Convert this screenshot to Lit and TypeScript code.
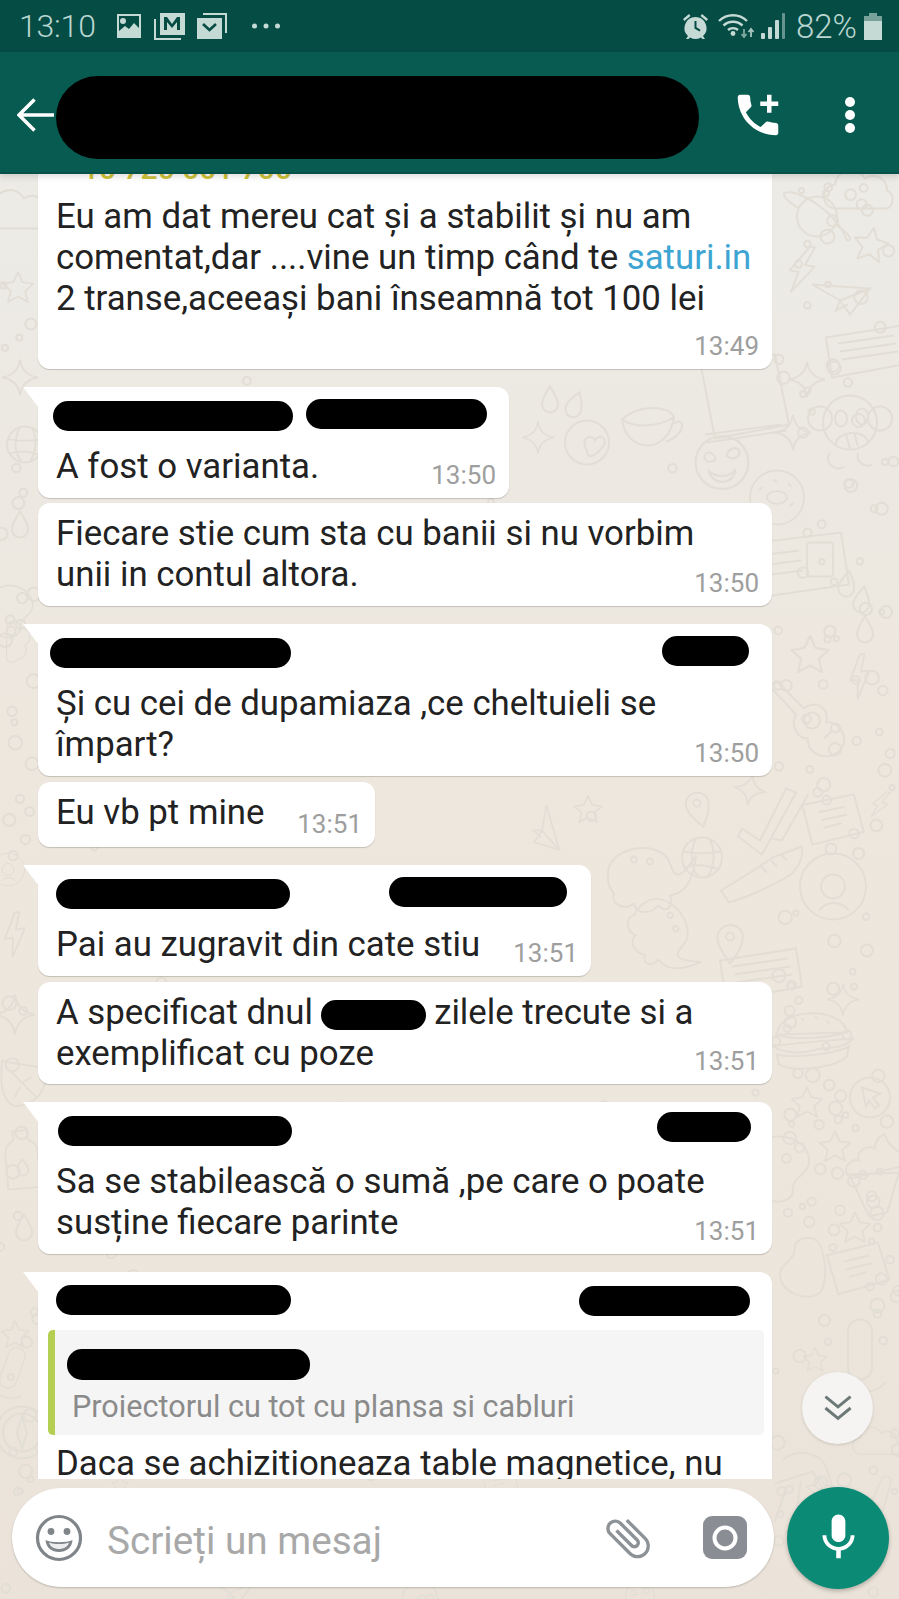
import { LitElement, html, css, svg } from "lit";
import { customElement } from "lit/decorators.js";

type Blob = { ml: number; w: number; mt: number };
type Msg = {
  cls: string;
  width: number;
  time: string;
  blobs?: Blob[];
  lines: unknown[];
};

const LINK = html`<span class="link">saturi.in</span>`;
const MESSAGES: Msg[] = [
  { cls: "top", width: 734, time: "13:49", lines: ["Eu am dat mereu cat și a stabilit și nu am", html`comentat,dar ....vine un timp când te ${LINK}`, "2 transe,aceeași bani înseamnă tot 100 lei"] },
  { cls: "group tail", width: 471, time: "13:50", blobs: [{ ml: -3, w: 240, mt: 14 }, { ml: 13, w: 181, mt: 12 }], lines: ["A fost o varianta."] },
  { cls: "cont", width: 734, time: "13:50", lines: ["Fiecare stie cum sta cu banii si nu vorbim", "unii in contul altora."] },
  { cls: "group tail", width: 734, time: "13:50", blobs: [{ ml: -6, w: 241, mt: 14 }, { ml: 371, w: 87, mt: 12 }], lines: ["Și cu cei de dupamiaza ,ce cheltuieli se", "împart?"] },
  { cls: "cont pb15", width: 337, time: "13:51", lines: ["Eu vb pt mine"] },
  { cls: "group tail", width: 553, time: "13:51", blobs: [{ ml: 0, w: 234, mt: 14 }, { ml: 99, w: 178, mt: 12 }], lines: ["Pai au zugravit din cate stiu"] },
  { cls: "cont pb11", width: 734, time: "13:51", lines: [html`A specificat dnul <span class="blob inline"></span> zilele trecute si a`, "exemplificat cu poze"] },
  { cls: "group tail", width: 734, time: "13:51", blobs: [{ ml: 2, w: 234, mt: 14 }, { ml: 365, w: 94, mt: 10 }], lines: ["Sa se stabilească o sumă ,pe care o poate", "susține fiecare parinte"] },
];

/* ---------- wallpaper doodles: a free canvas, coordinates are the content ---------- */
const D: Record<string, unknown> = {
  planet: svg`<circle r="20"/><path d="M-18-8C-34-18-36-24-30-24M18 8C34 18 36 24 30 24M-30-24C-16-26 20-4 30 24"/>`,
  cloud: svg`<path d="M-26 14a12 12 0 0 1-2-24a16 16 0 0 1 30-6a14 14 0 0 1 22 12a10 10 0 0 1 0 18z"/>`,
  star: svg`<path d="M0-17L5-6L17-4L8 4L11 16L0 10L-11 16L-8 4L-17-4L-5-6z" stroke-linejoin="round"/>`,
  sparkle: svg`<path d="M0-20Q2-3 20 0Q2 3 0 20Q-2 3-20 0Q-2-3 0-20z"/>`,
  bolt: svg`<path d="M4-24L-12 3H-3L-7 24L12-5H2L9-24z" stroke-linejoin="round"/>`,
  plane: svg`<path d="M-28-12L30-8L10 18L0 4zM0 4L30-8M0 4L-4 14L8 8"/>`,
  ticket: svg`<path d="M-40-14L36-26L42 12L-34 26zM-28-8L28-16M-26 0L30-8M-24 8L32 0"/>`,
  news: svg`<path d="M-46-20L38-30L46 22L-38 34zM-36-8L-4-12M-34 2L-2-2M-32 12L0 8"/><rect x="4" y="-20" width="26" height="34" rx="3"/>`,
  monkey: svg`<circle r="27"/><circle cx="-30" cy="-4" r="12"/><circle cx="30" cy="-4" r="12"/><ellipse cx="-9" cy="-4" rx="6" ry="8"/><ellipse cx="12" cy="-6" rx="6" ry="8"/><path d="M-14 22C-14 8 16 6 18 20M-4 12L0 26M4 10L8 24M-20 30a10 10 0 0 0 14 14M8 30a10 10 0 0 0 14 12"/>`,
  cup: svg`<path d="M-28-10C-24 24 18 26 24-12M-28-10C-14-24 18-26 24-12C10-4-14 0-28-10zM24-6C36-14 36 6 16 12"/>`,
  smiley: svg`<circle r="24"/><path d="M-16-4C-16-12-6-10-6-2C-12 0-14 0-16-4zM16-8C16-16 6-14 4-6C10-2 14-4 16-8zM-12 8C-4 14 8 14 12 6C12 20-8 22-12 8z"/>`,
  heart: svg`<circle r="22"/><path d="M-8 2C-12-8 0-10 2-4C6-12 16-6 10 2C6 8 0 12-4 12z" transform="translate(6,2)"/>`,
  drop: svg`<path d="M0-13C6-4 8 0 8 5a8 8 0 0 1-16 0C-8 0-6-4 0-13z"/>`,
  pin: svg`<path d="M0 22C-10 8-14 0-12-8a13 13 0 0 1 25 2C13 4 8 12 0 22z"/><circle cy="-5" r="4"/>`,
  burger: svg`<path d="M-36-8C-34-36 30-36 34-10zM-38-8C-20-2 20-4 38-12M-40 4C-20 0 20-2 40-4C30 8 10 4 0 8C-14 12-30 10-40 4zM-36 12C-20 16 20 12 36 4L34 14C20 26-20 30-34 22z"/><path d="M-12-24l3 2M2-26l3 2M14-22l2 3"/>`,
  ball: svg`<circle r="20"/><path d="M-19-6C-8-4 8-4 19-6M-17 10C-6 6 8 8 16 12M-6-19C-12-6-12 8-4 19M8-18C14-6 12 8 6 19"/>`,
  vinyl: svg`<circle r="33"/><circle r="12"/><path d="M-14 24C-6 14 8 14 16 24"/>`,
  guitar: svg`<path d="M-44-44L-16-16C-2-26 10-14 6-2C20-4 30 14 20 26C8 38-14 30-12 14C-22 14-30 2-24-10L-50-38z"/><circle cx="-8" cy="-4" r="8"/><path d="M4 14L12 6"/>`,
  sneaker: svg`<path d="M-46 18C-30 8-12-2 4-14C12-18 26-22 34-26C38-18 32-6 24 2C8 12-18 24-38 30z"/><path d="M-6-6l6 6M4-12l6 6M14-18l6 6"/>`,
  check: svg`<path d="M-30 6L-12 18L14-34L24-30L-10 32L-34 14zM0 16L10 18L36-28"/>`,
  card: svg`<path d="M-30-14L22-22L30 16L-22 26zM-14-6L12-10M-12 2L14-2M-10 10L8 6"/>`,
  cursor: svg`<circle r="20"/><path d="M-8-10L10-4L3 0L9 8L5 11L-1 3L-4 9z"/>`,
  cupcake: svg`<path d="M-26 2C-30-8-20-14-14-12C-18-22-4-28 2-24C2-34 10-38 12-38C14-30 18-26 24-22C32-18 36-8 30 0zM-22 6L28-6L14 40L-4 44z"/>`,
  blob: svg`<path d="M-22-26C-6-36 20-26 22-8C24 8 4 10 6 24C6 36-16 40-22 28C-30 10-30-16-22-26z"/>`,
  donut: svg`<circle r="30"/><ellipse rx="11" ry="7"/><path d="M-20-8l4-4M-4-20l4 3M12-16l4 4M18 6l-4 4M-14 14l4 2"/>`,
  octopus: svg`<path d="M-32 8C-36-24 22-32 30-6C36 14 44 4 56-14C54 6 48 24 30 26C34 38 26 44 18 36C10 46-4 44-6 34C-16 42-30 34-26 24C-30 20-32 14-32 8z"/><circle cx="-6" cy="-10" r="3"/><circle cx="10" cy="-8" r="3"/>`,
  book: svg`<path d="M-44-28L30-40L44 30L-30 44zM-40 40L36 30M-38 48L42 36"/>`,
  bottle: svg`<path d="M-8-32H8V-22C18-16 18-12 18-4V32H-18V-4C-18-12-18-16-8-22zM0 0C5 6 6 8 6 12a6 6 0 0 1-12 0C-6 8-5 6 0 0z"/>`,
  leaf: svg`<path d="M-22-26L26-18C30 6 14 24-8 24C-24 18-24-8-22-26zM-12-14L16 14M0-2L10-8M-2 2L-8 14"/>`,
  compass: svg`<circle r="26"/><circle r="19"/><path d="M0-16L5 0L0 16L-5 0z"/>`,
  rocket: svg`<path d="M-22-20C-4-34 18-24 22-10L34 30M-30 4L8-8L26 24M-18 6L-30 42M-4 2L-10 42"/>`,
  mic: svg`<path d="M-12-28a12 12 0 0 1 24 0V8a12 12 0 0 1-24 0zM-22 24C-12 36 16 36 26 22"/>`,
  key: svg`<path d="M-12 36L14-24C16-32 28-30 26-20L8 40z"/>`,
};

const PLACED: [string, number, number, number, number][] = [
  ["planet", 817, 217, 1, 0], ["cloud", 863, 195, 1, 0], ["star", 871, 245, 1, 10], ["bolt", 802, 270, 1, 10],
  ["plane", 840, 297, 1, 0], ["ticket", 866, 352, 1, 0], ["sparkle", 807, 380, 0.9, 0], ["monkey", 850, 423, 1, 0],
  ["book", 745, 395, 1, 0], ["cup", 650, 430, 1, 0], ["smiley", 722, 463, 1.1, 0], ["heart", 587, 443, 1, 0],
  ["sparkle", 538, 438, 0.8, 0], ["sparkle", 793, 433, 0.9, 0], ["donut", 777, 498, 0.9, 0], ["drop", 550, 400, 1, 0],
  ["drop", 575, 405, 1, 20], ["news", 803, 563, 1, 0], ["drop", 847, 584, 1, 10], ["drop", 862, 600, 1, 10], ["drop", 865, 630, 1, 0],
  ["guitar", 820, 725, 1, 0], ["star", 810, 655, 1.1, 0], ["bolt", 860, 677, 0.9, -10], ["plane", 545, 830, 0.8, 70],
  ["star", 588, 810, 0.8, 0], ["pin", 698, 808, 0.9, -15], ["check", 772, 823, 1, 0], ["card", 833, 818, 1, -3],
  ["ball", 702, 858, 1, 0], ["sneaker", 767, 873, 1, 0], ["vinyl", 833, 887, 1, 0], ["octopus", 640, 870, 1, 0],
  ["sparkle", 750, 790, 0.8, 10], ["bolt", 880, 805, 0.6, 20], ["pin", 730, 942, 1, 0], ["ticket", 760, 975, 1, 0],
  ["burger", 813, 1043, 1, 0], ["cursor", 870, 1098, 1, 0], ["star", 807, 1103, 0.9, 0], ["star", 835, 1147, 0.9, 0],
  ["cupcake", 873, 1173, 1, 0], ["blob", 787, 1167, 1, 0], ["star", 855, 1228, 0.9, 0], ["card", 858, 1267, 1, -5],
  ["sparkle", 843, 1000, 0.8, 0], ["octopus", 665, 925, 0.9, 60], ["blob", 800, 1270, 0.9, 180],
  ["mic", 860, 1360, 1, 0], ["star", 815, 1360, 0.7, 0], ["rocket", 805, 1480, 1, 0], ["star", 820, 1490, 0.8, 0],
  ["cloud", 880, 1445, 0.7, 0], ["key", 870, 1500, 0.8, 0], ["cloud", 22, 215, 1, 0], ["star", 18, 288, 0.9, 0],
  ["sparkle", 20, 378, 0.9, 0], ["ball", 25, 445, 0.9, 0], ["drop", 20, 525, 1, 0], ["blob", 15, 610, 0.8, 0],
  ["cloud", 15, 645, 0.6, 90], ["vinyl", 8, 870, 0.5, 0], ["bolt", 15, 935, 0.9, -10], ["sparkle", 15, 1015, 1, 0],
  ["leaf", 22, 1085, 0.9, 0], ["bottle", 22, 1160, 0.9, -5], ["drop", 24, 1228, 1, 0], ["star", 15, 1335, 0.8, 0],
  ["compass", 22, 1433, 1, 0], ["mic", 10, 1375, 0.7, 20], ["star", 120, 1485, 0.5, 0], ["card", 500, 1480, 0.6, 0],
  ["plane", 230, 1590, 0.8, 0], ["heart", 420, 1600, 0.8, 0], ["smiley", 640, 1596, 0.6, 0],
];

function dots() {
  const out: [number, number, number][] = [];
  let s = 12345;
  const r = () => ((s = (s * 1103515245 + 12345) & 0x7fffffff), s / 0x7fffffff);
  for (let i = 0; i < 170; i++) {
    const rightSide = r() > 0.25;
    const x = rightSide ? 775 + r() * 124 : r() * 38;
    out.push([x, 175 + r() * 1424, 2.5 + r() * 4.5]);
  }
  for (let i = 0; i < 80; i++) out.push([r() * 899, 175 + r() * 1424, 2.5 + r() * 3]);
  return out;
}
const DOTS = dots();

@customElement("app-wallpaper")
export class AppWallpaper extends LitElement {
  static styles = css`
    :host { position: absolute; inset: 0; display: block; background: linear-gradient(#ecebe6 0, #ede7de 38%, #ede6dc 70%, #ebe3d9 100%); }
    svg { display: block; width: 100%; height: 100%; fill: none; stroke: #e2ded5; stroke-width: 2; }
  `;
  render() {
    return html`<svg viewBox="0 175 899 1424">
      ${DOTS.map(([x, y, r]) => svg`<circle cx=${x} cy=${y} r=${r}/>`)}
      ${PLACED.map(([k, x, y, s, a]) => svg`<g transform="translate(${x},${y}) rotate(${a}) scale(${s})">${D[k]}</g>`)}
    </svg>`;
  }
}

@customElement("app-root")
export class AppRoot extends LitElement {
  static styles = css`
    :host { display: block; width: 899px; height: 1599px; overflow: hidden; font-family: Roboto, "Noto Sans", sans-serif; }
    .page { display: flex; flex-direction: column; height: 1599px; }

    .status { height: 52px; flex: none; background: #054c44; color: #b9d6d0; display: flex; align-items: center; padding: 0 17px 0 19px; font-size: 32px; font-weight: 300; }
    .status svg { display: block; flex: none; fill: #c5dad5; }
    .clock { width: 97px; letter-spacing: -0.2px; }
    .spacer { flex: 1; }
    .pct { margin: 0 7px 0 11px; font-size: 33px; font-weight: 300; }

    .bar { position: relative; z-index: 2; height: 122px; flex: none; background: #075b51; border-bottom: 2px solid #06524a; box-sizing: border-box; padding-top: 6px; display: flex; align-items: center; box-shadow: 0 3px 6px rgba(0, 0, 0, .12); }
    .bar svg { display: block; flex: none; fill: #fff; }
    .back { margin-left: 17px; }
    .title { margin: 5px 0 0 2px; width: 643px; height: 83px; background: #000; border-radius: 42px / 42px; flex: none; }
    .call { margin-left: 32px; }
    .more { margin-left: 59px; }

    .main { position: relative; flex: 1; display: flex; flex-direction: column; min-height: 0; }
    .chat { position: relative; flex: 1; min-height: 0; overflow: hidden; }
    .list { display: flex; flex-direction: column; align-items: flex-start; margin: -36px 0 0 38px; }

    .bubble { position: relative; box-sizing: border-box; background: #fff; border-radius: 12px; padding: 10px 18px 11px; box-shadow: 0 1px 1px rgba(0, 0, 0, .18); color: #222; font-size: 34.8px; line-height: 41px; white-space: nowrap; flex: none; }
    .group { margin-top: 18px; }
    .cont { margin-top: 5px; }
    .top { padding-bottom: 50px; padding-top: 10px; }
    .pb15 { padding-bottom: 14px; margin-top: 6px; }
    .pb11 { padding-bottom: 10px; margin-top: 6px; }
    .tail { border-top-left-radius: 0; padding-top: 0; }
    .tail::before { content: ""; position: absolute; left: -15px; top: 0; width: 16px; height: 21px; background: #fff; clip-path: polygon(0 0, 100% 0, 100% 100%); }
    .phone { color: #cfc23a; font-weight: 500; font-size: 30px; margin: 0 0 7px 26px; }
    .link { color: #3ea5d3; }
    .time { position: absolute; right: 13px; bottom: 8px; font-size: 26px; line-height: 30px; color: #9e9e9e; }

    .senders { display: flex; height: 59px; align-items: flex-start; }
    .blob { display: block; flex: none; height: 30px; background: #000; border-radius: 15px; }
    .blob.inline { display: inline-block; width: 105px; vertical-align: -6px; margin-left: -1px; }

    .quote { position: relative; box-sizing: border-box; width: 716px; height: 105px; margin: -1px 0 8px -8px; background: #f5f5f5; border-left: 7px solid #b5cf52; border-radius: 5px; padding: 57px 0 0 17px; overflow: hidden; }
    .quote .blob { position: absolute; left: 12px; top: 19px; width: 243px; height: 31px; }
    .quote .qtext { font-size: 30.6px; line-height: 40px; color: #8b8b8b; display: block; }

    .scroll { position: absolute; left: 802px; top: 1198px; width: 71px; height: 72px; border-radius: 50%; background: #f5f4f2; box-shadow: 0 1px 3px rgba(0, 0, 0, .15); display: flex; align-items: center; justify-content: center; z-index: 1; }
    .scroll svg { display: block; }

    .foot { position: relative; flex: none; height: 120px; box-sizing: border-box; padding: 9px 10px 12px 12px; display: flex; gap: 13px; align-items: center; }
    .input { flex: 1; height: 99px; background: #fff; border-radius: 50px; box-shadow: 0 1px 2px rgba(0, 0, 0, .2); display: flex; align-items: center; }
    .input svg { display: block; flex: none; }
    .emoji { margin-left: 23px; }
    .ph { flex: 1; margin-left: 24px; font-size: 38.7px; color: #a8a8a8; position: relative; top: 3px; }
    .clip { margin-right: 48px; }
    .cam { margin-right: 27px; }
    .mic { width: 102px; height: 102px; border-radius: 50%; background: #0b8a75; box-shadow: 0 2px 4px rgba(0, 0, 0, .25); display: flex; align-items: center; justify-content: center; flex: none; }
    .mic svg { display: block; fill: #fff; }
  `;

  private bubble(m: Msg) {
    return html`<div class="bubble ${m.cls}" style="width:${m.width}px">
      ${m.cls === "top" ? html`<div class="phone">10 720 001 700</div>` : ""}
      ${m.blobs ? html`<div class="senders">${m.blobs.map((b) => html`<span class="blob" style="margin-left:${b.ml}px;width:${b.w}px;margin-top:${b.mt}px"></span>`)}</div>` : ""}
      ${m.lines.map((l) => html`<div>${l}</div>`)}
      <span class="time">${m.time}</span>
    </div>`;
  }

  render() {
    return html`<div class="page">
      <div class="status">
        <span class="clock">13:10</span>
        <svg width="26" height="26" viewBox="0 0 26 26" style="margin-right:12px"><path fill-rule="evenodd" d="M1 1h24v24H1zM3 3v15l6-5 4 3 5-6 5 5V3zM7 5a3 3 0 1 1 0 6 3 3 0 0 1 0-6z"/></svg>
        <svg width="31" height="27" viewBox="0 0 31 27" style="margin-right:12px"><path d="M6 0h25v22H6zM0 6h2v19h25v2H0z"/><path d="M10 17V4h3l5 7 5-7h3v13h-3V9l-5 6-5-6v8z" fill="#054c44"/></svg>
        <svg width="30" height="26" viewBox="0 0 30 26" style="margin-right:24px"><path d="M6 0h24v20h-2V2H6z"/><path d="M0 5h25v21H0z"/><path d="M6 11l6.500 6L19 11" fill="none" stroke="#054c44" stroke-width="2.600"/></svg>
        <svg width="30" height="8" viewBox="0 0 30 8"><circle cx="3.500" cy="4" r="2.500"/><circle cx="15" cy="4" r="2.500"/><circle cx="26.500" cy="4" r="2.500"/></svg>
        <span class="spacer"></span>
        <svg width="27" height="27" viewBox="0 0 27 27" style="margin-right:9px"><path d="M7 1L1 6l1.500 2 6-5zM20 1l6 5-1.500 2-6-5z"/><path fill-rule="evenodd" d="M13.500 4a11 11 0 0 1 7.500 19l2 3h-2.500l-1.500-1.500a11 11 0 0 1-11 0L6.500 26H4l2-3A11 11 0 0 1 13.500 4zM12.500 8v7.500l5 3 1-1.800-4-2.400V8z"/></svg>
        <svg width="38" height="28" viewBox="0 0 38 28" style="margin-right:5px"><g fill="none" stroke="#c5dad5" stroke-width="2.400"><path d="M1 9a20 20 0 0 1 28 0"/><path d="M5.500 13.500a14 14 0 0 1 19 0"/><path d="M10 18a7.500 7.500 0 0 1 10 0"/></g><circle cx="15" cy="21.500" r="2.400"/><path d="M26 17v7M23.500 22l2.500 3 2.500-3" fill="none" stroke="#7fa8a0" stroke-width="1.800"/><path d="M33 25v-7M30.500 20l2.500-3 2.500 3" fill="none" stroke="#a5c6bf" stroke-width="1.800"/></svg>
        <svg width="24" height="26" viewBox="0 0 24 26"><rect x="0" y="20" width="4" height="6" rx="1"/><rect x="7" y="14" width="4" height="12" rx="1"/><rect x="14" y="7" width="4" height="19" rx="1"/><rect x="21" y="0" width="3" height="26" rx="1" opacity=".5"/></svg>
        <span class="pct">82%</span>
        <svg width="18" height="27" viewBox="0 0 18 27"><path d="M5 0h8v3H5z" opacity=".6"/><path d="M0 3h18v5H0z" opacity=".6"/><path d="M0 8h18v19H0z"/></svg>
      </div>

      <div class="bar">
        <svg class="back" width="37" height="34" viewBox="0 0 38 34"><path d="M18 1L2 17l16 16M2 17h36" fill="none" stroke="#fff" stroke-width="3.600"/></svg>
        <div class="title"></div>
        <svg class="call" width="54" height="54" viewBox="0 0 24 24"><path d="M20 15.500c-1.250 0-2.450-.2-3.570-.57-.35-.11-.74-.03-1.020.24l-2.200 2.200c-2.830-1.440-5.150-3.750-6.590-6.590l2.200-2.210c.28-.26.360-.65.250-1C8.700 6.450 8.500 5.250 8.500 4c0-.55-.45-1-1-1H4c-.55 0-1 .45-1 1 0 9.390 7.610 17 17 17 .55 0 1-.45 1-1v-3.500c0-.55-.45-1-1-1zM21 6h-3V3h-2v3h-3v2h3v3h2V8h3z"/></svg>
        <svg class="more" width="12" height="36" viewBox="0 0 12 36"><circle cx="6" cy="5" r="5"/><circle cx="6" cy="18" r="5"/><circle cx="6" cy="31" r="5"/></svg>
      </div>

      <div class="main">
        <app-wallpaper></app-wallpaper>
        <div class="chat">
          <div class="list">
            ${MESSAGES.map((m) => this.bubble(m))}
            <div class="bubble group tail" style="width:734px">
              <div class="senders">
                <span class="blob" style="margin-left:0;width:235px;margin-top:13px"></span>
                <span class="blob" style="margin-left:288px;width:171px;margin-top:14px"></span>
              </div>
              <div class="quote"><span class="blob"></span><span class="qtext">Proiectorul cu tot cu plansa si cabluri</span></div>
              <div>Daca se achizitioneaza table magnetice, nu</div>
            </div>
          </div>
        </div>
        <div class="scroll">
          <svg width="32" height="32" viewBox="0 0 28 28"><path d="M3 4l11 9 11-9M3 14l11 9 11-9" fill="none" stroke="#6d7878" stroke-width="2.600"/></svg>
        </div>
        <div class="foot">
          <div class="input">
            <svg class="emoji" width="48" height="48" viewBox="0 0 48 48"><circle cx="24" cy="24" r="21.500" fill="none" stroke="#80858a" stroke-width="3.200"/><circle cx="16" cy="17.500" r="3.400" fill="#80858a"/><circle cx="32" cy="17.500" r="3.400" fill="#80858a"/><path d="M10.500 26C16 29 32 29 37.500 26C37 34 31 38 24 38S11 34 10.500 26z" fill="#80858a"/><path d="M14 28.500C20 30.500 28 30.500 34 28.500C33 33 28 35 24 35S15 33 14 28.500z" fill="#fff" opacity=".85"/></svg>
            <span class="ph">Scrieți un mesaj</span>
            <svg class="clip" width="54" height="54" viewBox="0 0 24 24"><path transform="rotate(-45 12 12)" fill="#8d9297" d="M16.500 6v11.500c0 2.210-1.790 4-4 4s-4-1.790-4-4V5c0-1.380 1.120-2.500 2.500-2.500s2.500 1.120 2.500 2.500v10.500c0 .55-.45 1-1 1s-1-.45-1-1V6H10v9.500c0 1.380 1.120 2.500 2.500 2.500s2.500-1.120 2.500-2.500V5c0-2.210-1.790-4-4-4S7 2.790 7 5v12.500c0 3.040 2.460 5.500 5.500 5.500s5.500-2.460 5.500-5.500V6h-1.500z"/></svg>
            <svg class="cam" width="44" height="43" viewBox="0 0 44 43"><rect width="44" height="43" rx="9" fill="#8b8d94"/><circle cx="22" cy="22" r="10.500" fill="none" stroke="#fff" stroke-width="4"/></svg>
          </div>
          <div class="mic">
            <svg width="55" height="55" viewBox="0 0 24 24"><path d="M12 14c1.660 0 2.990-1.340 2.990-3L15 5c0-1.660-1.340-3-3-3S9 3.340 9 5v6c0 1.660 1.340 3 3 3zm5.300-3c0 3-2.540 5.100-5.300 5.100S6.700 14 6.700 11H5c0 3.410 2.720 6.230 6 6.720V21h2v-3.280c3.280-.48 6-3.300 6-6.720h-1.700z"/></svg>
          </div>
        </div>
      </div>
    </div>`;
  }
}
